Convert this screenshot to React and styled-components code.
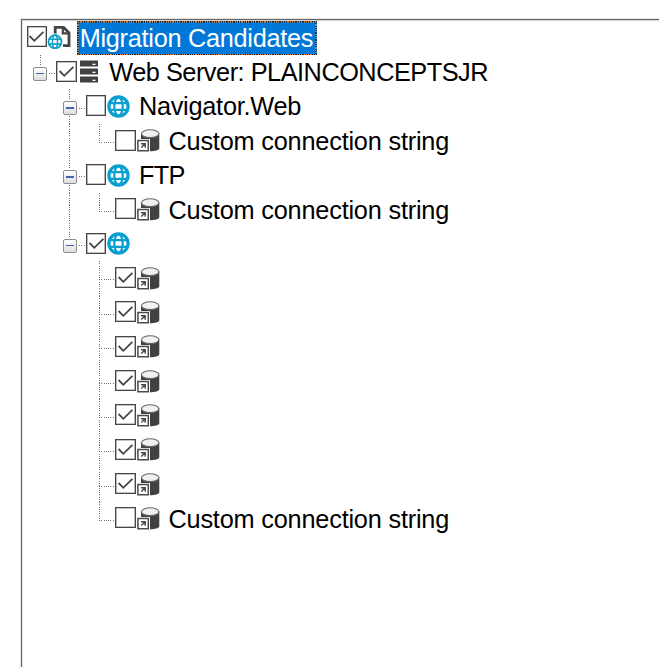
import React from "react";
import styled, { createGlobalStyle } from "styled-components";

const Page = createGlobalStyle`
  * { box-sizing: border-box; }
  body { margin: 0; background: #fff; overflow: hidden; }
`;

const Frame = styled.main`
  height: 667px;
  padding: 19px 0 0 21px;
  background: #fff;
`;

const Tree = styled.div`
  height: 648px;
  border-top: 1px solid #666;
  border-left: 1px solid #686868;
  box-shadow: 0 0 0 1px #e4e4e4, inset 0 1px #d4d4d4, inset 1px 0 #e4e4e4;
  padding: 0.75px 0 0 5px;
`;

const Row = styled.div`
  display: flex;
  height: 34.36px;
  align-items: center;
  white-space: nowrap;
`;

const across = "repeating-linear-gradient(90deg, #707070 0 1.1px, transparent 1.1px 2.28px)";
const down = "repeating-linear-gradient(180deg, #707070 0 1.1px, transparent 1.1px 2.28px)";

const Guide = styled.span`
  flex: 0 0 29.6px;
  height: 100%;
  display: flex;
  align-items: center;
  padding: 3px 0 0 6px;
  background-image: ${(p) => (p.$line === "none" ? "none" : p.$line === "pass" ? down : `${down}, ${across}`)};
  background-repeat: no-repeat;
  background-position: 12.6px 0, 13px 18.2px;
  background-size: 1.2px ${(p) => (p.$line === "end" ? "19px" : "100%")}, 17px 1.2px;
`;

const Expander = styled.span`
  width: 14px;
  height: 14px;
  border: 1px solid #8d8d8d;
  border-radius: 2px;
  box-shadow: 0 0 0 1px #fff, 2px 0 #fff;
  background: linear-gradient(#fff, #dedede);
  display: grid;
  place-items: center;

  &::before {
    content: "";
    width: 8px;
    height: 1.4px;
    background: #4563b4;
  }
`;

const Check = styled.span`
  flex: 0 0 20.5px;
  height: 21px;
  margin-top: -2px;
  margin-left: -0.3px;
  border: 1px solid #464646;
  box-shadow: inset 0 0 0 0.6px #8a8a8a;
  background: #fff;
  display: grid;
  place-items: center;
`;

const IconSlot = styled.span`
  flex: 0 0 23px;
  height: 23px;
  margin: -0.6px 0 0 0.8px;
  display: grid;
  place-items: center;
`;

const Label = styled.span`
  height: 34.4px;
  margin-left: 5.7px;
  padding: 0 3px;
  font: 25.3px/34px "Liberation Sans", Arial, sans-serif;
  letter-spacing: ${(p) => p.$tracking}px;
  color: #000;
`;

const dash = (deg) => `repeating-linear-gradient(${deg}deg, #16202c 0 1.15px, #ef8427 1.15px 2.3px)`;

const SelectedLabel = styled(Label)`
  width: 240px;
  color: #fff;
  background:
    ${dash(90)} 0 0 / 100% 1.5px no-repeat,
    ${dash(90)} 0 100% / 100% 1.5px no-repeat,
    ${dash(180)} 0 0 / 1.5px 100% no-repeat,
    ${dash(180)} 100% 0 / 1.5px 100% no-repeat,
    #0078d7;
`;

const Drawing = styled.svg`
  display: block;
  overflow: visible;
`;

const Tick = () => (
  <Drawing width="17" height="17" viewBox="0 0 17 17" fill="none">
    <path d="M1.6 8 6.3 12.8 15.4 3.8" stroke="#454545" strokeWidth="1.8" />
  </Drawing>
);

const Globe = () => (
  <Drawing width="23" height="23" viewBox="0 0 23 23">
    <circle cx="11.5" cy="11.5" r="9.6" fill="#fff" stroke="#0b9fd0" strokeWidth="3.2" />
    <ellipse cx="11.5" cy="11.5" rx="4.2" ry="9.2" fill="none" stroke="#0b9fd0" strokeWidth="2.2" />
    <path d="M3 8.2h17M3 14.8h17" fill="none" stroke="#0b9fd0" strokeWidth="2.3" />
  </Drawing>
);

const Site = () => (
  <Drawing width="23" height="23" viewBox="0 0 23 23">
    <path d="M7.2 8V1.4h8.4l5.4 5.4v12.8h-6" fill="#fff" stroke="#444" strokeWidth="2.8" />
    <path d="M14.8 1.5v5.9h6" fill="none" stroke="#444" strokeWidth="2.2" />
    <circle cx="7" cy="15.7" r="8.2" fill="#fff" />
    <circle cx="7" cy="15.7" r="6.5" fill="#fff" stroke="#0b9fc8" strokeWidth="1.8" />
    <ellipse cx="7" cy="15.7" rx="2.5" ry="6.5" fill="none" stroke="#0b9fc8" strokeWidth="1.5" />
    <path d="M1 13.3h12M1 18.1h12" stroke="#0b9fc8" strokeWidth="1.6" />
  </Drawing>
);

const Server = () => (
  <Drawing width="23" height="23" viewBox="0 0 23 23">
    <path d="M2 .5h18v6H2zM2 8.5h18v6H2zM2 16.5h18v6H2z" fill="#414141" />
    <path d="M14.5 4.3h3M14.5 12.3h3M14.5 20.3h3" stroke="#fff" strokeWidth="1.3" />
  </Drawing>
);

const Database = () => (
  <Drawing width="23" height="23" viewBox="0 0 23 23">
    <path d="M4 4.5v14.8c0 4 18.3 4 18.3 0V4.5z" fill="#414141" />
    <ellipse cx="13.2" cy="4.7" rx="8.7" ry="3.9" fill="#f1f1f1" stroke="#666" strokeWidth="1.1" />
    <path d="M0 10h13v13H0z" fill="#fff" />
    <path d="M.9 11.4h10.4v10.4H.9z" fill="#fff" stroke="#4c4c4c" strokeWidth="1.5" />
    <path d="M4 14.7h4.2v4.1M7.9 15l-3.6 3.6" fill="none" stroke="#454545" strokeWidth="1.4" />
  </Drawing>
);

const icons = { site: Site, server: Server, globe: Globe, database: Database };

const database = (checked, last) => ({
  guides: ["none", "none", last ? "end" : "branch"],
  icon: "database",
  checked,
});
const custom = { text: "Custom connection string", tracking: -0.2 };

const rows = [
  { guides: [], icon: "site", checked: true, text: "Migration Candidates", tracking: -0.28, selected: true },
  { guides: ["end"], open: true, icon: "server", checked: true, text: "Web Server: PLAINCONCEPTSJR", tracking: -0.48 },
  { guides: ["none", "branch"], open: true, icon: "globe", text: "Navigator.Web", tracking: -0.25 },
  { ...database(false, true), guides: ["none", "pass", "end"], ...custom },
  { guides: ["none", "branch"], open: true, icon: "globe", text: "FTP", tracking: -0.7 },
  { ...database(false, true), guides: ["none", "pass", "end"], ...custom },
  { guides: ["none", "end"], open: true, icon: "globe", checked: true },
  ...Array.from({ length: 7 }, () => database(true, false)),
  { ...database(false, true), ...custom },
];

function TreeRow({ row }) {
  const Icon = icons[row.icon];
  const Text = row.selected ? SelectedLabel : Label;
  return (
    <Row>
      {row.guides.map((line, i) => (
        <Guide key={i} $line={line}>
          {row.open && i === row.guides.length - 1 && <Expander />}
        </Guide>
      ))}
      <Check>{row.checked && <Tick />}</Check>
      <IconSlot><Icon /></IconSlot>
      {row.text && <Text $tracking={row.tracking}>{row.text}</Text>}
    </Row>
  );
}

export default function App() {
  return (
    <Frame>
      <Page />
      <Tree>
        {rows.map((row, i) => <TreeRow key={i} row={row} />)}
      </Tree>
    </Frame>
  );
}
